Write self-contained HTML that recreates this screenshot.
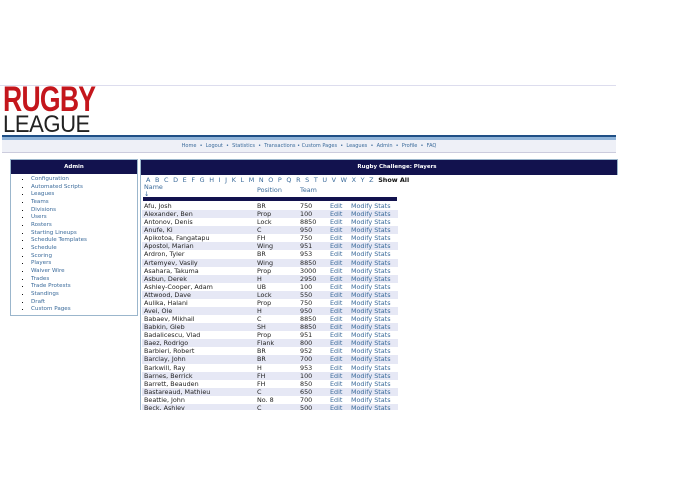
<!DOCTYPE html><html><head><style>
body{margin:0;width:695px;height:494px;background:#fff;font-family:"DejaVu Sans","Liberation Sans",sans-serif;position:relative;overflow:hidden}
.a{position:absolute}
a{color:#3a6a9a;text-decoration:none}
.hd{background:#12124e;color:#fff;font-weight:bold;font-size:5.5px;text-align:center;line-height:14px;height:14px}
ul{margin:0;padding:0 0 0 20px;font-size:5.6px;line-height:7.65px}
li{list-style:square;color:#111}
li span{color:#3a6a9a}
.r{position:relative;height:8.08px;line-height:8.08px;font-size:6.4px;color:#222;white-space:nowrap;width:256px}
.r.s{background:#e6e8f5}
.r span{position:absolute;top:0}
.r a{position:absolute;top:0}
</style></head><body>
<div class="a" style="left:0;top:85px;width:616px;height:1px;background:#dde"></div>
<div class="a" style="left:3px;top:82px;font:bold 35px/36px 'Liberation Sans Narrow','Liberation Sans',sans-serif;color:#c4161c;letter-spacing:-1px;transform:scaleX(.76);transform-origin:left">RUGBY</div>
<div class="a" style="left:3px;top:113px;font:24px/24px 'Liberation Sans',sans-serif;color:#222;letter-spacing:-.5px;transform:scaleX(.92);transform-origin:left">LEAGUE</div>
<div class="a" style="left:2px;top:135px;width:614px;height:2px;background:#1f4f86"></div>
<div class="a" style="left:2px;top:137px;width:614px;height:3px;background:#8fb3d8"></div>
<div class="a" style="left:2px;top:140px;width:614px;height:12px;background:#eef0f7;border-bottom:1px solid #ccd"></div>
<div class="a" style="left:2px;top:143px;width:614px;text-align:center;font-size:5px;color:#3a6a9a">Home &nbsp;•&nbsp; Logout &nbsp;•&nbsp; Statistics &nbsp;•&nbsp; Transactions • Custom Pages &nbsp;•&nbsp; Leagues &nbsp;•&nbsp; Admin &nbsp;•&nbsp; Profile &nbsp;•&nbsp; FAQ</div>
<div class="a" style="left:10px;top:159px;width:126px;height:155px;border:1px solid #9bb6cc">
<div class="hd">Admin</div>
<ul style="margin-top:2px"><li><span>Configuration</span></li><li><span>Automated Scripts</span></li><li><span>Leagues</span></li><li><span>Teams</span></li><li><span>Divisions</span></li><li><span>Users</span></li><li><span>Rosters</span></li><li><span>Starting Lineups</span></li><li><span>Schedule Templates</span></li><li><span>Schedule</span></li><li><span>Scoring</span></li><li><span>Players</span></li><li><span>Waiver Wire</span></li><li><span>Trades</span></li><li><span>Trade Protests</span></li><li><span>Standings</span></li><li><span>Draft</span></li><li><span>Custom Pages</span></li></ul>
</div>
<div class="a" style="left:140px;top:159px;width:476px;height:15px;border:1px solid #9bb6cc;border-bottom:none"><div class="hd" style="height:15px;line-height:15px;padding-left:36px">Rugby Challenge: Players</div></div>
<div class="a" style="left:140px;top:174px;width:1px;height:236px;background:#9bb6cc"></div>
<div class="a" style="left:146px;top:176px;font-size:6.4px;color:#3a6a9a;word-spacing:2.6px">A B C D E F G H I J K L M N O P Q R S T U V W X Y Z <b style="color:#111;word-spacing:0">Show All</b></div>
<div class="a" style="left:144px;top:184px;font-size:6.4px;color:#3a6a9a;line-height:7px">Name<br>↓</div>
<div class="a" style="left:257px;top:186px;font-size:6.4px;color:#3a6a9a">Position</div>
<div class="a" style="left:300px;top:186px;font-size:6.4px;color:#3a6a9a">Team</div>
<div class="a" style="left:143px;top:197px;width:254px;height:4px;background:#12124e"></div>
<div class="a" id="t" style="left:142px;top:202px;width:260px;height:208px;overflow:hidden">
<div class="r"><span style="left:2px">Afu, Josh</span><span style="left:115px">BR</span><span style="left:158px">750</span><a style="left:188px">Edit</a><a style="left:209px">Modify Stats</a></div>
<div class="r s"><span style="left:2px">Alexander, Ben</span><span style="left:115px">Prop</span><span style="left:158px">100</span><a style="left:188px">Edit</a><a style="left:209px">Modify Stats</a></div>
<div class="r"><span style="left:2px">Antonov, Denis</span><span style="left:115px">Lock</span><span style="left:158px">8850</span><a style="left:188px">Edit</a><a style="left:209px">Modify Stats</a></div>
<div class="r s"><span style="left:2px">Anufe, Ki</span><span style="left:115px">C</span><span style="left:158px">950</span><a style="left:188px">Edit</a><a style="left:209px">Modify Stats</a></div>
<div class="r"><span style="left:2px">Apikotoa, Fangatapu</span><span style="left:115px">FH</span><span style="left:158px">750</span><a style="left:188px">Edit</a><a style="left:209px">Modify Stats</a></div>
<div class="r s"><span style="left:2px">Apostol, Marian</span><span style="left:115px">Wing</span><span style="left:158px">951</span><a style="left:188px">Edit</a><a style="left:209px">Modify Stats</a></div>
<div class="r"><span style="left:2px">Ardron, Tyler</span><span style="left:115px">BR</span><span style="left:158px">953</span><a style="left:188px">Edit</a><a style="left:209px">Modify Stats</a></div>
<div class="r s"><span style="left:2px">Artemyev, Vasily</span><span style="left:115px">Wing</span><span style="left:158px">8850</span><a style="left:188px">Edit</a><a style="left:209px">Modify Stats</a></div>
<div class="r"><span style="left:2px">Asahara, Takuma</span><span style="left:115px">Prop</span><span style="left:158px">3000</span><a style="left:188px">Edit</a><a style="left:209px">Modify Stats</a></div>
<div class="r s"><span style="left:2px">Asbun, Derek</span><span style="left:115px">H</span><span style="left:158px">2950</span><a style="left:188px">Edit</a><a style="left:209px">Modify Stats</a></div>
<div class="r"><span style="left:2px">Ashley-Cooper, Adam</span><span style="left:115px">UB</span><span style="left:158px">100</span><a style="left:188px">Edit</a><a style="left:209px">Modify Stats</a></div>
<div class="r s"><span style="left:2px">Attwood, Dave</span><span style="left:115px">Lock</span><span style="left:158px">550</span><a style="left:188px">Edit</a><a style="left:209px">Modify Stats</a></div>
<div class="r"><span style="left:2px">Aulika, Halani</span><span style="left:115px">Prop</span><span style="left:158px">750</span><a style="left:188px">Edit</a><a style="left:209px">Modify Stats</a></div>
<div class="r s"><span style="left:2px">Avei, Ole</span><span style="left:115px">H</span><span style="left:158px">950</span><a style="left:188px">Edit</a><a style="left:209px">Modify Stats</a></div>
<div class="r"><span style="left:2px">Babaev, Mikhail</span><span style="left:115px">C</span><span style="left:158px">8850</span><a style="left:188px">Edit</a><a style="left:209px">Modify Stats</a></div>
<div class="r s"><span style="left:2px">Babkin, Gleb</span><span style="left:115px">SH</span><span style="left:158px">8850</span><a style="left:188px">Edit</a><a style="left:209px">Modify Stats</a></div>
<div class="r"><span style="left:2px">Badalicescu, Vlad</span><span style="left:115px">Prop</span><span style="left:158px">951</span><a style="left:188px">Edit</a><a style="left:209px">Modify Stats</a></div>
<div class="r s"><span style="left:2px">Baez, Rodrigo</span><span style="left:115px">Flank</span><span style="left:158px">800</span><a style="left:188px">Edit</a><a style="left:209px">Modify Stats</a></div>
<div class="r"><span style="left:2px">Barbieri, Robert</span><span style="left:115px">BR</span><span style="left:158px">952</span><a style="left:188px">Edit</a><a style="left:209px">Modify Stats</a></div>
<div class="r s"><span style="left:2px">Barclay, John</span><span style="left:115px">BR</span><span style="left:158px">700</span><a style="left:188px">Edit</a><a style="left:209px">Modify Stats</a></div>
<div class="r"><span style="left:2px">Barkwill, Ray</span><span style="left:115px">H</span><span style="left:158px">953</span><a style="left:188px">Edit</a><a style="left:209px">Modify Stats</a></div>
<div class="r s"><span style="left:2px">Barnes, Berrick</span><span style="left:115px">FH</span><span style="left:158px">100</span><a style="left:188px">Edit</a><a style="left:209px">Modify Stats</a></div>
<div class="r"><span style="left:2px">Barrett, Beauden</span><span style="left:115px">FH</span><span style="left:158px">850</span><a style="left:188px">Edit</a><a style="left:209px">Modify Stats</a></div>
<div class="r s"><span style="left:2px">Bastareaud, Mathieu</span><span style="left:115px">C</span><span style="left:158px">650</span><a style="left:188px">Edit</a><a style="left:209px">Modify Stats</a></div>
<div class="r"><span style="left:2px">Beattie, John</span><span style="left:115px">No. 8</span><span style="left:158px">700</span><a style="left:188px">Edit</a><a style="left:209px">Modify Stats</a></div>
<div class="r s"><span style="left:2px">Beck, Ashley</span><span style="left:115px">C</span><span style="left:158px">500</span><a style="left:188px">Edit</a><a style="left:209px">Modify Stats</a></div>
</div>
</body></html>
